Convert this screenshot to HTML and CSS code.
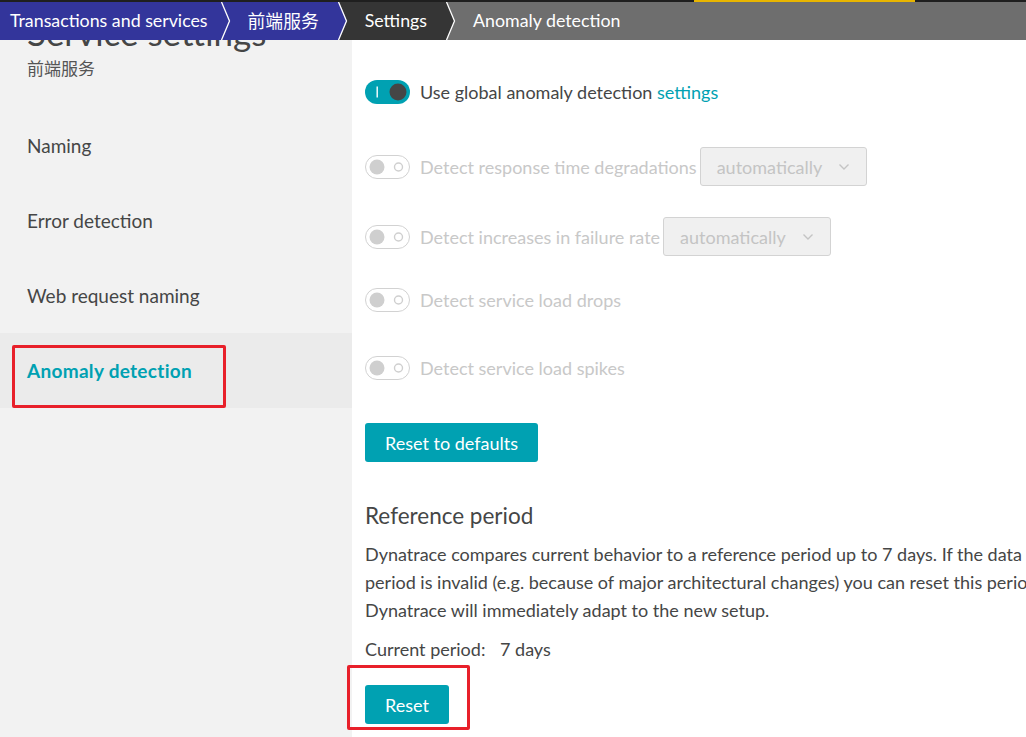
FILE: index.html
```html
<!DOCTYPE html>
<html>
<head>
<meta charset="utf-8">
<link rel="stylesheet" href="styles.css">
</head>
<body>
<div class="page">
  <header class="topbar">
    <div class="strip"><span class="strip-accent"></span></div>
    <nav class="crumbs">
      <span class="crumb crumb-blue crumb-first">Transactions and services</span>
      <svg class="sep" viewBox="0 0 12 38" preserveAspectRatio="none"><polygon points="0,0 2,0 10,19 2,38 0,38" fill="#33359b"/><polygon points="2,0 12,0 12,38 2,38 10,19" fill="#33359b"/><polyline points="1.5,0 9.5,19 1.5,38" fill="none" stroke="#fff" stroke-width="1.3"/></svg>
      <span class="crumb crumb-blue">前端服务</span>
      <svg class="sep" viewBox="0 0 12 38" preserveAspectRatio="none"><polygon points="0,0 2,0 10,19 2,38 0,38" fill="#33359b"/><polygon points="2,0 12,0 12,38 2,38 10,19" fill="#353535"/><polyline points="1.5,0 9.5,19 1.5,38" fill="none" stroke="#fff" stroke-width="1.3"/></svg>
      <span class="crumb crumb-dark">Settings</span>
      <svg class="sep" viewBox="0 0 12 38" preserveAspectRatio="none"><polygon points="0,0 2,0 10,19 2,38 0,38" fill="#353535"/><polygon points="2,0 12,0 12,38 2,38 10,19" fill="#6e6e6e"/><polyline points="1.5,0 9.5,19 1.5,38" fill="none" stroke="#fff" stroke-width="1.3"/></svg>
      <span class="crumb crumb-gray">Anomaly detection</span>
    </nav>
  </header>

  <main class="layout">
    <aside class="sidebar">
      <h1 class="side-title">Service settings</h1>
      <div class="side-sub">前端服务</div>
      <ul class="side-nav">
        <li class="nav-item">Naming</li>
        <li class="nav-item">Error detection</li>
        <li class="nav-item">Web request naming</li>
        <li class="nav-item nav-active">Anomaly detection</li>
      </ul>
      <span class="mark mark-nav"></span>
    </aside>

    <section class="content">
      <div class="row row-1">
        <svg class="toggle" viewBox="0 0 45 24"><rect x="0" y="0" width="45" height="24" rx="12" fill="#00a1b2"/><rect x="11.5" y="6.5" width="1.4" height="11" fill="#fff"/><circle cx="33" cy="12" r="8.5" fill="#454646"/></svg>
        <span class="label">Use global anomaly detection <a class="link">settings</a></span>
      </div>
      <div class="row row-2 disabled">
        <svg class="toggle" viewBox="0 0 45 24"><rect x="0.5" y="0.5" width="44" height="23" rx="11.5" fill="#fff" stroke="#d2d2d2"/><circle cx="12" cy="12" r="7.5" fill="#cfcfcf"/><circle cx="33.5" cy="12" r="4" fill="none" stroke="#cfcfcf" stroke-width="1.4"/></svg>
        <span class="label">Detect response time degradations</span>
        <span class="select">automatically<svg class="chev" viewBox="0 0 12 8"><polyline points="1.5,1.5 6,6 10.5,1.5" fill="none" stroke="#c4c4c4" stroke-width="1.4"/></svg></span>
      </div>
      <div class="row row-3 disabled">
        <svg class="toggle" viewBox="0 0 45 24"><rect x="0.5" y="0.5" width="44" height="23" rx="11.5" fill="#fff" stroke="#d2d2d2"/><circle cx="12" cy="12" r="7.5" fill="#cfcfcf"/><circle cx="33.5" cy="12" r="4" fill="none" stroke="#cfcfcf" stroke-width="1.4"/></svg>
        <span class="label">Detect increases in failure rate</span>
        <span class="select">automatically<svg class="chev" viewBox="0 0 12 8"><polyline points="1.5,1.5 6,6 10.5,1.5" fill="none" stroke="#c4c4c4" stroke-width="1.4"/></svg></span>
      </div>
      <div class="row row-4 disabled">
        <svg class="toggle" viewBox="0 0 45 24"><rect x="0.5" y="0.5" width="44" height="23" rx="11.5" fill="#fff" stroke="#d2d2d2"/><circle cx="12" cy="12" r="7.5" fill="#cfcfcf"/><circle cx="33.5" cy="12" r="4" fill="none" stroke="#cfcfcf" stroke-width="1.4"/></svg>
        <span class="label">Detect service load drops</span>
      </div>
      <div class="row row-5 disabled">
        <svg class="toggle" viewBox="0 0 45 24"><rect x="0.5" y="0.5" width="44" height="23" rx="11.5" fill="#fff" stroke="#d2d2d2"/><circle cx="12" cy="12" r="7.5" fill="#cfcfcf"/><circle cx="33.5" cy="12" r="4" fill="none" stroke="#cfcfcf" stroke-width="1.4"/></svg>
        <span class="label">Detect service load spikes</span>
      </div>

      <button class="btn btn-defaults">Reset to defaults</button>

      <h2 class="section-title">Reference period</h2>
      <p class="desc">Dynatrace compares current behavior to a reference period up to 7 days. If the data in this period is invalid (e.g. because of major architectural changes) you can reset this period and Dynatrace will immediately adapt to the new setup.</p>
      <div class="period"><span class="period-label">Current period:</span><span>7 days</span></div>
      <div class="reset-wrap">
        <button class="btn btn-reset">Reset</button>
        <span class="mark mark-reset"></span>
      </div>
    </section>
  </main>
</div>
</body>
</html>
```

FILE: styles.css
```css
* { box-sizing: border-box; }
html, body {
  margin: 0;
  padding: 0;
  width: 1026px;
  height: 737px;
  overflow: hidden;
  background: #fff;
  font-family: Lato, "Noto Sans CJK SC", sans-serif;
  color: #454646;
}
.page {
  display: flex;
  flex-direction: column;
  height: 737px;
}
.topbar {
  position: relative;
  z-index: 2;
  flex: none;
}
.strip {
  height: 2px;
  background: #1f1f1f;
  display: flex;
}
.strip-accent {
  margin-left: 694px;
  width: 221px;
  background: #e8b500;
}
.crumbs {
  display: flex;
  height: 38px;
  background: #6e6e6e;
  align-items: stretch;
}
.crumb {
  display: flex;
  align-items: center;
  color: #fff;
  font-size: 17.8px;
  padding: 0 18px 2px 16px;
  white-space: nowrap;
}
.crumb-first { padding-left: 10px; padding-right: 12px; }
.crumb-blue { background: #33359b; }
.crumb-dark { background: #353535; }
.crumb-gray { background: #6e6e6e; }
.sep { width: 12px; height: 38px; flex: none; display: block; }

.layout {
  flex: 1;
  display: flex;
  min-height: 0;
}
.sidebar {
  position: relative;
  width: 352px;
  flex: none;
  background: #f2f2f2;
}
.side-title {
  margin: -29px 0 0 27px;
  font-size: 35px;
  font-weight: 400;
  line-height: 42px;
  color: #454646;
  white-space: nowrap;
}
.side-sub {
  margin: 4px 0 0 27px;
  font-size: 17px;
  line-height: 24px;
  color: #555;
}
.side-nav {
  list-style: none;
  margin: 27px 0 0;
  padding: 0;
}
.nav-item {
  height: 75px;
  display: flex;
  align-items: center;
  padding-left: 27px;
  font-size: 19px;
  color: #454646;
}
.nav-active {
  background: #ebebeb;
  color: #00a1b2;
  font-weight: 700;
  letter-spacing: 0.3px;
}
.mark {
  position: absolute;
  border: 3px solid #e8202a;
  border-radius: 2px;
  pointer-events: none;
}
.mark-nav {
  left: 12px;
  top: 305px;
  width: 214px;
  height: 63px;
}

.content {
  flex: 1;
  padding-left: 13px;
  min-width: 0;
}
.row {
  display: flex;
  align-items: center;
  font-size: 18px;
}
.row-1 { margin-top: 40px; height: 24px; }
.row-2 { margin-top: 43px; height: 39px; }
.row-3 { margin-top: 31px; height: 39px; }
.row-4 { margin-top: 32px; height: 24px; }
.row-5 { margin-top: 44px; height: 24px; }
.toggle { width: 45px; height: 24px; flex: none; margin-right: 10px; }
.label { white-space: nowrap; }
.link { color: #00a1b2; }
.disabled .label { color: #c8c8c8; }
.select {
  display: flex;
  align-items: center;
  height: 39px;
  margin-left: 3px;
  padding: 0 16px 0 16px;
  background: #f0f0f0;
  border: 1px solid #d3d3d3;
  border-radius: 3px;
  color: #c4c4c4;
  font-size: 18px;
}
.chev { width: 12px; height: 8px; margin-left: 16px; }

.btn {
  display: block;
  border: 0;
  border-radius: 3px;
  background: #00a1b2;
  color: #fff;
  font-family: Lato, sans-serif;
  font-size: 18px;
  height: 39px;
  padding: 0 20px;
  cursor: pointer;
}
.btn-defaults { margin-top: 43px; }
.section-title {
  margin: 40px 0 0;
  font-size: 22.5px;
  font-weight: 400;
  line-height: 28px;
  color: #454646;
}
.desc {
  margin: 10px 0 0;
  width: 740px;
  font-size: 18px;
  line-height: 28px;
}
.period {
  margin-top: 13px;
  font-size: 18px;
  line-height: 24px;
}
.period-label { display: inline-block; width: 135px; }
.reset-wrap {
  position: relative;
  margin-top: 24px;
  width: 82px;
}
.mark-reset {
  left: -18px;
  top: -20px;
  width: 123px;
  height: 65px;
}
```
